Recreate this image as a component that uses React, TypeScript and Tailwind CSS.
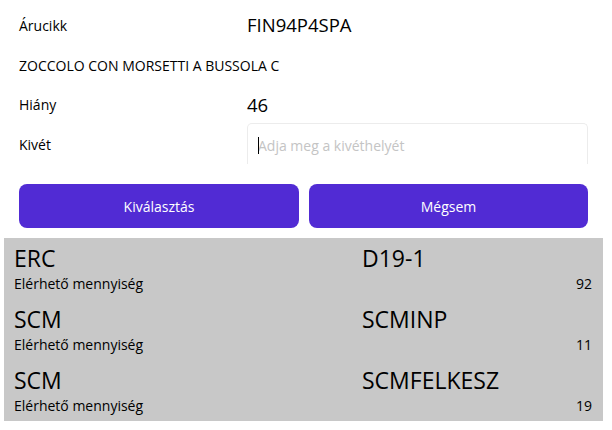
import React from "react";

interface IStockRow {
  warehouse: string;
  location: string;
  qty: number;
}

const rows: IStockRow[] = [
  { warehouse: "ERC", location: "D19-1", qty: 92 },
  { warehouse: "SCM", location: "SCMINP", qty: 11 },
  { warehouse: "SCM", location: "SCMFELKESZ", qty: 19 },
];

const StockRow: React.FC<{ row: IStockRow }> = ({ row }) => (
  <div className="h-[61px] pt-[5px] pl-[10px] pr-[11px]">
    <div className="grid grid-cols-[348px_1fr] h-[30px] text-[23px] leading-[30px] text-black">
      <span>{row.warehouse}</span>
      <span>{row.location}</span>
    </div>
    <div className="mt-[1px] flex justify-between h-[20px] text-[14px] leading-[20px] text-black">
      <span>Elérhető mennyiség</span>
      <span>{row.qty}</span>
    </div>
  </div>
);

export default function App() {
  return (
    <div
      className="w-[612px] h-[430px] bg-white overflow-hidden"
      style={{ fontFamily: '"Open Sans", "Noto Sans", sans-serif' }}
    >
      <div className="pl-[19px] pr-[24px] pt-[5px]">
        <div className="grid grid-cols-[228px_1fr] h-[40px] items-center">
          <span className="text-[14px] text-black">Árucikk</span>
          <span className="text-[18.5px] text-black">FIN94P4SPA</span>
        </div>
        <div className="flex h-[40px] items-center">
          <span className="text-[14px] text-black">
            ZOCCOLO CON MORSETTI A BUSSOLA C
          </span>
        </div>
        <div className="grid grid-cols-[228px_1fr] h-[38px] items-center">
          <span className="text-[14px] text-black mt-[1px]">Hiány</span>
          <span className="text-[18.5px] text-black mt-[2px]">46</span>
        </div>
        <div className="grid grid-cols-[228px_1fr] h-[41px]">
          <span className="text-[14px] text-black self-center mt-[2px]">Kivét</span>
          <div className="relative h-[41px] border-t border-x border-[#ececec] rounded-t-[5px]">
            <input
              className="w-full h-full pl-[10px] pt-[2px] text-[14px] outline-none placeholder:text-[#c4c4c4] bg-transparent"
              placeholder="Adja meg a kivéthelyét"
            />
            <span className="absolute left-[10px] top-[13px] w-px h-[17px] bg-black" />
          </div>
        </div>
        <div className="mt-[20px] flex gap-[10px]">
          <button className="w-[280px] h-[44px] rounded-[8px] bg-[#512bd4] text-white text-[14px]">
            Kiválasztás
          </button>
          <button className="w-[279px] h-[44px] rounded-[8px] bg-[#512bd4] text-white text-[14px]">
            Mégsem
          </button>
        </div>
      </div>
      <div className="ml-[4px] mt-[10px] w-[599px] bg-[#c8c8c8]">
        {rows.map((row, i) => (
          <StockRow key={i} row={row} />
        ))}
      </div>
    </div>
  );
}
